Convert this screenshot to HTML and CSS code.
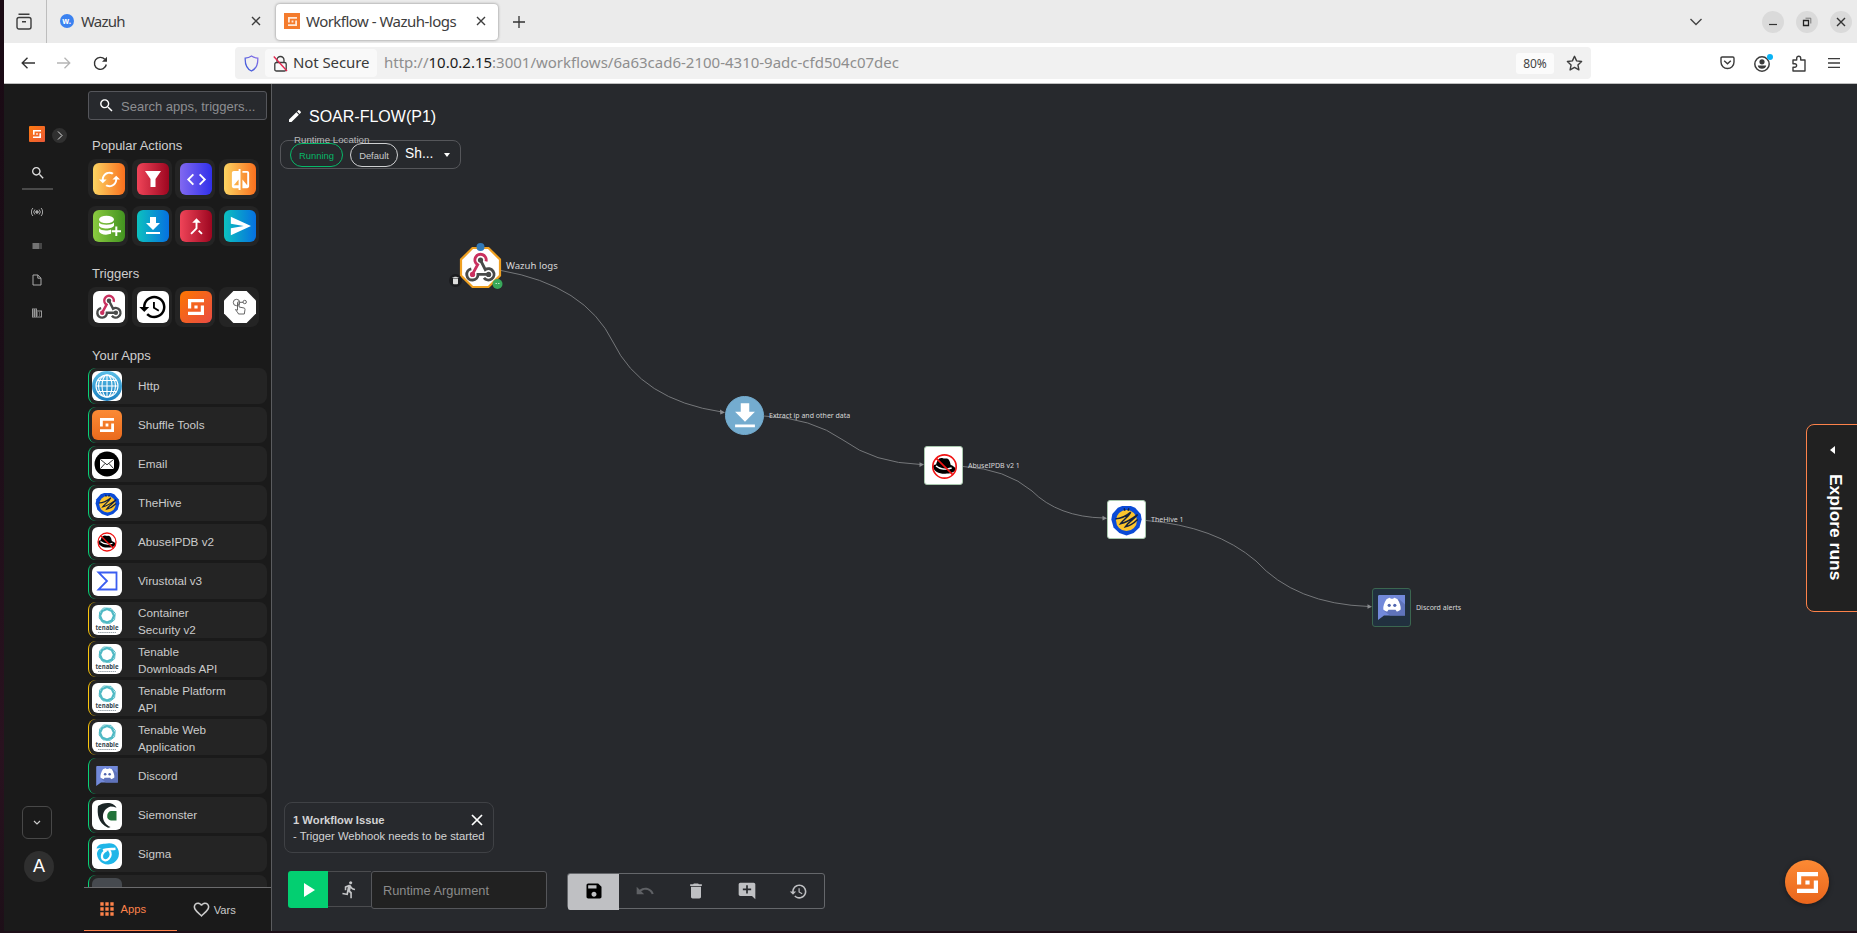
FILE: index.html
```html
<!DOCTYPE html>
<html lang="en">
<head>
<meta charset="utf-8">
<title>Workflow - Wazuh-logs</title>
<link rel="stylesheet" href="styles.css">
</head>
<body>
<svg class="defs" aria-hidden="true">
  <defs>
    <linearGradient id="g-sky" x1="0" y1="0" x2="0" y2="1"><stop offset="0" stop-color="#5cc0e8"/><stop offset="1" stop-color="#1a7fc0"/></linearGradient>
    <linearGradient id="g-shield" x1="0" y1="1" x2="1" y2="0"><stop offset="0" stop-color="#3559d8"/><stop offset="1" stop-color="#8a6fe8"/></linearGradient>
  </defs>
  <symbol id="close" viewBox="0 0 10 10"><path d="M1 1l8 8M9 1L1 9" fill="none" stroke="currentColor" stroke-width="1.4"/></symbol>
  <symbol id="shuffle" viewBox="0 0 20 20"><path d="M0 0h20v4H4v8H0zM20 20H0v-4h16V8h4zM8 8h4v4H8z" fill="currentColor"/></symbol>
  <symbol id="search" viewBox="0 0 24 24"><path fill="currentColor" d="M15.5 14h-.79l-.28-.27C15.41 12.59 16 11.11 16 9.5 16 5.91 13.09 3 9.5 3S3 5.91 3 9.5 5.91 16 9.5 16c1.61 0 3.09-.59 4.23-1.57l.27.28v.79l5 4.99L20.49 19l-4.99-5zm-6 0C7.01 14 5 11.99 5 9.5S7.01 5 9.5 5 14 7.01 14 9.5 11.99 14 9.5 14z"/></symbol>
  <symbol id="download" viewBox="0 0 24 24"><path fill="currentColor" d="M19 9h-4V3H9v6H5l7 7 7-7zM5 18v2h14v-2H5z"/></symbol>
  <symbol id="trash" viewBox="0 0 24 24"><path fill="currentColor" d="M6 19c0 1.1.9 2 2 2h8c1.1 0 2-.9 2-2V7H6v12zM19 4h-3.5l-1-1h-5l-1 1H5v2h14V4z"/></symbol>
  <symbol id="history" viewBox="0 0 24 24"><path fill="currentColor" d="M13 3c-4.97 0-9 4.03-9 9H1l3.89 3.89.07.14L9 12H6c0-3.87 3.13-7 7-7s7 3.13 7 7-3.13 7-7 7c-1.93 0-3.68-.79-4.94-2.06l-1.42 1.42C8.27 19.99 10.51 21 13 21c4.97 0 9-4.03 9-9s-4.03-9-9-9zm-1 5v5l4.28 2.54.72-1.21-3.5-2.08V8H12z"/></symbol>
  <symbol id="webhook" viewBox="0 0 24 24">
    <g fill="none" stroke-width="2.1">
      <path d="M16 7.6A4.1 4.1 0 1 0 9.9 10L6.3 16.6" stroke="#c9305f"/>
      <path d="M12 6.6l3.5 6.9a4.1 4.1 0 1 1-1 6" stroke="#484a49"/>
      <path d="M17.8 17h-7.6a4.1 4.1 0 1 1-4.9-4" stroke="#484a49"/>
    </g>
    <circle cx="12" cy="6.6" r="1.9" fill="#484a49"/><circle cx="6.2" cy="17" r="1.9" fill="#c9305f"/><circle cx="17.9" cy="17" r="1.9" fill="#484a49"/>
  </symbol>
  <symbol id="thehive" viewBox="0 0 30 30">
    <path d="M8 5.5l3.5-1.400h7L22 5.500l4.500 5 .8 4.500-1.800 6.500-4.700 4.400-5.800 2.100-5.800-2.100L4.500 21.500 2.700 15l.8-4.500z" fill="#0b4bd6"/>
    <circle cx="15" cy="15.800" r="8.500" fill="#fcc52d"/>
    <path d="M13 6l.8 1.800M17 6l-.8 1.800M6 14.500c5-.3 9-2.500 12.500-5.500M18.500 9c-2 4-6 6-8.500 9.500 5-1 10-4.500 14-7.500M24 11c-3 4-7.500 6-10 10 4-1 7.500-3.500 10-6" fill="none" stroke="#14223c" stroke-width="1.200"/>
  </symbol>
  <symbol id="abuse" viewBox="0 0 30 30">
    <path d="M6.200 15.500c-.3-1.600 1.300-2.200 2.300-2 .8-2.600 1.700-5 4-5 1.300 0 1.600.5 2.700.4 2.700-.4 3.800.8 4.600 5 2 .6 4.200 2.400 3.800 3.500-1 2.400-4.700 3.300-8.600 3.200-4.500 0-8.200-2.300-8.800-5.100z" fill="#000"/>
    <path d="M8.500 14.500c3 2.600 8 3 12 1.700" fill="none" stroke="#fff" stroke-width="1.200"/>
    <circle cx="15" cy="15" r="9" fill="none" stroke="#f01414" stroke-width="1.300"/><path d="M8.700 8.700l12.600 12.600" stroke="#f01414" stroke-width="1.300"/>
  </symbol>
  <symbol id="discord" viewBox="0 0 27 25">
    <path d="M0 1.500C0 .5.500 0 1.500 0H27v20.500H6L0 25z" fill="#7289da"/>
    <path d="M21 4l6 5.500v11H12l-6-4.500z" fill="#5f73bb"/>
    <path d="M8.500 4.200C10.500 3 12 2.800 12 2.800l.8.900h2.400l.8-.9s1.500.2 3.500 1.400c2.200 3.500 3.500 7 3.200 10.300-1.700 1.700-4 2-4 2l-1.200-1.700h-7l-1.200 1.700s-2.300-.3-4-2c-.3-3.300 1-6.800 3.200-10.300z" fill="#fff"/>
    <circle cx="11.200" cy="10.300" r="1.600" fill="#5166b0"/><circle cx="16.800" cy="10.300" r="1.600" fill="#5166b0"/>
  </symbol>
</svg>

<div class="desktop">
  <div class="window">
    <header class="tabs">
      <div class="tabs-view"><svg width="16" height="17" viewBox="0 0 16 17" fill="none" stroke="#3c3c3c" stroke-width="1.400"><rect x="1" y="4.500" width="14" height="11.500" rx="2"/><path d="M2.500 1.200h11M6 8.800h4"/></svg></div>
      <div class="tab">
        <svg class="tab-fav" width="14" height="14" viewBox="0 0 14 14"><circle cx="7" cy="7" r="7" fill="#3b82f0"/><text x="6.600" y="9.600" text-anchor="middle" class="fav-word">w.</text></svg>
        <span class="tab-title t1">Wazuh</span><svg class="x" width="10" height="10"><use href="#close"/></svg>
      </div>
      <div class="tab active">
        <span class="fav-shuffle"><svg width="9" height="9"><use href="#shuffle"/></svg></span>
        <span class="tab-title t2">Workflow - Wazuh-logs</span><svg class="x" width="10" height="10"><use href="#close"/></svg>
      </div>
      <svg class="plus" width="12" height="12" viewBox="0 0 12 12"><path d="M6 0v12M0 6h12" stroke="#333" stroke-width="1.300"/></svg>
      <div class="tabs-right">
        <svg class="more" width="14" height="8" viewBox="0 0 14 8"><path d="M1.500 1l5.500 5.500L12.500 1" fill="none" stroke="#444" stroke-width="1.400"/></svg>
        <span class="wbtn"><svg width="10" height="10" viewBox="0 0 10 10"><path d="M1 7.500h8" stroke="#333" stroke-width="1.200"/></svg></span>
        <span class="wbtn"><svg width="10" height="10" viewBox="0 0 10 10" fill="none"><path d="M1.500 3.500h5v5h-5z" stroke="#222" stroke-width="1.300"/><path d="M3.500 1.200h5.300v5.300" stroke="#777"/></svg></span>
        <span class="wbtn"><svg width="10" height="10"><use href="#close"/></svg></span>
      </div>
    </header>

    <nav class="toolbar">
      <svg class="back" width="14" height="12" viewBox="0 0 14 12"><path d="M14 6H1M6.500 .7L1.200 6l5.300 5.300" fill="none" stroke="#333" stroke-width="1.400"/></svg>
      <svg class="fwd" width="14" height="12" viewBox="0 0 14 12"><path d="M0 6h13M7.500 .7L12.800 6l-5.300 5.300" fill="none" stroke="#b5b5b5" stroke-width="1.300"/></svg>
      <svg class="reload" width="15" height="15" viewBox="0 0 15 15"><path d="M13.300 8.500A6 6 0 1 1 11.800 3.300" fill="none" stroke="#333" stroke-width="1.400"/><path d="M14 .8v5H9z" fill="#333"/></svg>
      <div class="url">
        <svg class="shield" width="15" height="17" viewBox="0 0 15 17"><path d="M7.500 1c2 1.400 4 2 6.300 2.200.2 5.600-1 10.300-6.300 12.800C2.200 13.500 1 8.800 1.200 3.200 3.500 3 5.500 2.400 7.500 1z" fill="none" stroke="url(#g-shield)" stroke-width="1.300"/></svg>
        <div class="secure">
          <svg width="15" height="17" viewBox="0 0 15 17" fill="none"><path d="M4 7.500V5a3.500 3.500 0 0 1 7 0v2.500M3.500 7.500h8c1 0 1.700.6 1.700 1.500v5.500c0 .9-.7 1.500-1.700 1.500h-8c-1 0-1.700-.6-1.700-1.500V9c0-.9.700-1.500 1.700-1.500z" stroke="#3c3c3c" stroke-width="1.300"/><path d="M.8 1.500L14 16" stroke="#e22850" stroke-width="1.400"/></svg>
          <span>Not Secure</span>
        </div>
        <span class="address">http://<b>10.0.2.15</b>:3001/workflows/6a63cad6-2100-4310-9adc-cfd504c07dec</span>
        <span class="zoom">80%</span>
        <svg width="17" height="17" viewBox="0 0 17 17"><path d="M8.500 1.300l2.100 4.600 5 .6-3.700 3.400 1 5-4.400-2.500-4.400 2.500 1-5L1.400 6.500l5-.6z" fill="none" stroke="#3c3c3c" stroke-width="1.400" stroke-linejoin="round"/></svg>
      </div>
      <div class="tools">
        <svg width="15" height="14" viewBox="0 0 15 14" fill="none" stroke="#3c3c3c" stroke-width="1.400"><path d="M2.200 1h10.600c.8 0 1.200.5 1.200 1.200V6c0 4-3 6.500-6.500 6.500S1 10 1 6V2.200C1 1.500 1.400 1 2.200 1z"/><path d="M4.200 4.700l3.300 3.100 3.300-3.100"/></svg>
        <svg width="19" height="18" viewBox="0 0 19 18"><circle cx="8" cy="10" r="7.200" fill="none" stroke="#3c3c3c" stroke-width="1.500"/><circle cx="8" cy="7.800" r="2.600" fill="#3c3c3c"/><path d="M3.800 11.500h8.400c0 2-2 3.300-4.200 3.300s-4.200-1.300-4.200-3.300z" fill="#3c3c3c"/><circle cx="16" cy="3" r="3" fill="#0ab3f5"/></svg>
        <svg width="14" height="17" viewBox="0 0 14 17"><path d="M1 5h3.700V3.200a2 2 0 0 1 4 0V5H13v11H1v-3.700h1.800a1.800 1.800 0 0 0 0-3.600H1z" fill="none" stroke="#3c3c3c" stroke-width="1.400" stroke-linejoin="round"/></svg>
        <svg class="menu" width="12" height="10" viewBox="0 0 12 10"><path d="M0 .7h12M0 5h12M0 9.300h12" stroke="#3c3c3c" stroke-width="1.300"/></svg>
      </div>
    </nav>

    <main class="app">
      <aside class="rail">
        <div class="rail-top"><span class="logo"><svg width="8" height="8"><use href="#shuffle"/></svg></span><span class="expand"><svg width="6" height="9" viewBox="0 0 6 9"><path d="M1 .5l4 4-4 4" fill="none" stroke="#ddd"/></svg></span></div>
        <div class="rail-item current"><svg width="16" height="16"><use href="#search"/></svg></div>
        <svg class="r2" width="12" height="10" viewBox="0 0 12 10" fill="none" stroke="#aaa"><circle cx="6" cy="5" r="1.300" fill="#aaa"/><path d="M3.900 2.500a3.500 3.500 0 0 0 0 5M8.100 2.500a3.500 3.500 0 0 1 0 5M1.900 1a6 6 0 0 0 0 8M10.100 1a6 6 0 0 1 0 8"/></svg>
        <svg class="r3" width="12" height="12" viewBox="0 0 24 24"><path fill="#ccc" d="M3 9h14V7H3v2zm0 4h14v-2H3v2zm0 4h14v-2H3v2zm16 0h2v-2h-2v2zm0-10v2h2V7h-2zm0 6h2v-2h-2v2z"/></svg>
        <svg class="r4" width="10" height="12" viewBox="0 0 10 12"><path d="M1 1h4.800L9 4.200V11H1zM5.800 1v3.200H9" fill="none" stroke="#aaa"/></svg>
        <svg class="r5" width="12" height="12" viewBox="0 0 24 24"><path fill="#999" d="M12 7V3H2v18h20V7H12zM6 19H4v-2h2v2zm0-4H4v-2h2v2zm0-4H4V9h2v2zm0-4H4V5h2v2zm4 12H8v-2h2v2zm0-4H8v-2h2v2zm0-4H8V9h2v2zm0-4H8V5h2v2zm10 12h-8v-2h2v-2h-2v-2h2v-2h-2V9h8v10zm-2-8h-2v2h2v-2zm0 4h-2v2h2v-2z"/></svg>
        <div class="rail-bottom">
          <span class="rail-more"><svg width="8" height="5" viewBox="0 0 8 5"><path d="M1 1l3 3 3-3" fill="none" stroke="#ccc" stroke-width="1.200"/></svg></span>
          <span class="avatar">A</span>
        </div>
      </aside>

      <section class="panel">
        <div class="panel-body">
          <div class="search"><svg width="17" height="17"><use href="#search"/></svg><span>Search apps, triggers...</span></div>
          <h2 class="h-popular">Popular Actions</h2>
          <div class="tiles">
            <div class="tile"><span class="yellow"><svg width="23" height="23" viewBox="0 0 24 24"><path fill="#fff" d="M19 8l-4 4h3c0 3.310-2.690 6-6 6-1.010 0-1.970-.25-2.800-.7l-1.460 1.460C8.970 19.540 10.430 20 12 20c4.420 0 8-3.580 8-8h3l-4-4zM6 12c0-3.310 2.690-6 6-6 1.010 0 1.970.25 2.800.7l1.460-1.460C15.030 4.460 13.570 4 12 4c-4.420 0-8 3.580-8 8H1l4 4 4-4H6z"/></svg></span></div>
            <div class="tile"><span class="red"><svg width="16" height="16" viewBox="0 0 16 16"><path fill="#fff" d="M0 0h16l-5.500 8v8h-5V8z"/></svg></span></div>
            <div class="tile"><span class="violet"><svg width="23" height="23" viewBox="0 0 24 24"><path fill="#fff" d="M9.400 16.600L4.800 12l4.600-4.600L8 6l-6 6 6 6 1.400-1.400zm5.200 0l4.600-4.600-4.600-4.600L16 6l6 6-6 6-1.400-1.400z"/></svg></span></div>
            <div class="tile"><span class="yellow"><svg width="23" height="23" viewBox="0 0 24 24"><path fill="#fff" d="M10 3H5c-1.100 0-2 .9-2 2v14c0 1.100.9 2 2 2h5v2h2V1h-2v2zm0 15H5l5-6v6zm9-15h-5v2h5v13l-5-6v9h5c1.100 0 2-.9 2-2V5c0-1.100-.9-2-2-2z"/></svg></span></div>
            <div class="tile"><span class="green"><svg width="24" height="22" viewBox="0 0 24 22"><g fill="#fff"><ellipse cx="9.500" cy="4.500" rx="7.500" ry="3.800"/><path d="M2 7.500c2 3 13 3 15 0v3c-1 4-14 4-15 0zM2 13c2 3 9 3 12 1.500v4.300C9 20.500 3 19.500 2 16.500z"/><path d="M18.300 11.500h2v3.700H24v2h-3.700V21h-2v-3.800h-3.600v-2h3.600z"/></g></svg></span></div>
            <div class="tile"><span class="cyan"><svg class="white" width="24" height="24"><use href="#download"/></svg></span></div>
            <div class="tile"><span class="red"><svg width="23" height="23" viewBox="0 0 24 24"><path fill="#fff" d="M17 20.410L18.410 19 15 15.590 13.590 17 17 20.410zM7.500 8H11v5.590L5.590 19 7 20.410l6-6V8h3.500L12 3.500 7.500 8z"/></svg></span></div>
            <div class="tile"><span class="cyan"><svg width="22" height="22" viewBox="0 0 24 24"><path fill="#fff" d="M2 22L24 12 2 2v7.500L16 12 2 14.500z"/></svg></span></div>
          </div>
          <h2 class="h-triggers">Triggers</h2>
          <div class="tiles">
            <div class="tile"><span class="paper"><svg width="28" height="28"><use href="#webhook"/></svg></span></div>
            <div class="tile"><span class="paper black"><svg width="30" height="30"><use href="#history"/></svg></span></div>
            <div class="tile"><span class="orange"><svg class="white" width="16" height="16"><use href="#shuffle"/></svg></span></div>
            <div class="tile"><svg width="32" height="32" viewBox="0 0 32 32"><path d="M9.400 0h13.200L32 9.400v13.200L22.600 32H9.400L0 22.600V9.400z" fill="#fff"/><g fill="none" stroke="#555" stroke-width=".9"><circle cx="12.500" cy="11.500" r="3.200"/><circle cx="20.700" cy="11" r="1.700"/><path d="M15.700 11.300h3.300M13.500 19v-7.500c0-1 1.600-1 1.600 0v4.500l5 1c.8.300 1 .8.900 1.500l-.7 4.500h-5.800c-.5-1.500-2-2.500-3-4.500l2 .8"/></g></svg></div>
          </div>
          <h2 class="h-apps">Your Apps</h2>
          <ul class="apps">
            <li><span class="ic"><svg width="30" height="30" viewBox="0 0 30 30"><circle cx="15" cy="15" r="15" fill="url(#g-sky)"/><g fill="none" stroke="#fff" stroke-width="1.100"><circle cx="15" cy="15" r="11"/><ellipse cx="15" cy="15" rx="5" ry="11"/><ellipse cx="15" cy="15" rx="8.500" ry="11"/><path d="M15 4v22M4 15h22M6 9.500h18M6 20.500h18"/></g></svg></span><span class="name">Http</span></li>
            <li><span class="ic orange2"><svg class="white" width="14" height="14"><use href="#shuffle"/></svg></span><span class="name">Shuffle Tools</span></li>
            <li><span class="ic"><svg width="30" height="30" viewBox="0 0 30 30"><circle cx="15" cy="15" r="12.500" fill="#000"/><rect x="8" y="10" width="14" height="10" rx="1" fill="#fff"/><path d="M8.500 10.500l6.500 5.300 6.500-5.300M8.500 19.500l4.500-5M21.500 19.500l-4.500-5" fill="none" stroke="#000" stroke-width=".8"/></svg></span><span class="name">Email</span></li>
            <li><span class="ic"><svg width="29" height="29"><use href="#thehive"/></svg></span><span class="name">TheHive</span></li>
            <li><span class="ic"><svg width="30" height="30"><use href="#abuse"/></svg></span><span class="name">AbuseIPDB v2</span></li>
            <li><span class="ic"><svg width="30" height="30" viewBox="0 0 30 30"><path d="M6.500 6.500h18v17h-18l8.500-8.500z" fill="none" stroke="#3a5df0" stroke-width="1.800"/></svg></span><span class="name">Virustotal v3</span></li>
            <li class="warn"><span class="ic"><svg width="30" height="30" viewBox="0 0 30 30"><g id="tenable"><g fill="none" stroke="#4fb9c4"><path d="M15 4l4.800 2 2.200 4.800-2.200 4.800-4.800 2-4.800-2L8 10.800 10.200 6z" stroke-width="2.200"/><path d="M11.500 3l7.500.4 4.200 4.900-.6 6.500-4.600 3.500-7-.5-3.800-4.700.4-6z" stroke-width="1"/></g><text x="15" y="25.300" text-anchor="middle" textLength="23" lengthAdjust="spacingAndGlyphs" class="tenable-word">tenable</text><path d="M6 27.500h18" stroke="#9aa4ab" stroke-width="1" stroke-dasharray="1.500 .6"/></g></svg></span><span class="name">Container Security v2</span></li>
            <li class="warn"><span class="ic"><svg width="30" height="30" viewBox="0 0 30 30"><use href="#tenable"/></svg></span><span class="name">Tenable Downloads API</span></li>
            <li class="warn"><span class="ic"><svg width="30" height="30" viewBox="0 0 30 30"><use href="#tenable"/></svg></span><span class="name">Tenable Platform API</span></li>
            <li class="warn"><span class="ic"><svg width="30" height="30" viewBox="0 0 30 30"><use href="#tenable"/></svg></span><span class="name">Tenable Web Application</span></li>
            <li><span class="ic clear"><svg width="22" height="20"><use href="#discord"/></svg></span><span class="name">Discord</span></li>
            <li><span class="ic"><svg width="30" height="30" viewBox="0 0 30 30"><path d="M18.500 3.300C13 2.500 9.500 4 6 6c-1 8 0 17 9.500 21.500 1 .3 2 .1 3-.5-9.500-4-10.500-17 0-20.500 2 0 4 .5 6 1.300-.5-1.500-3-3.800-6-4.500z" fill="#1b2526"/><path d="M24.500 11v9.500h-5.500a4 4 0 0 1-3.800-4.500c0-3 1.800-5 4.300-5z" fill="#22733a"/></svg></span><span class="name">Siemonster</span></li>
            <li><span class="ic"><svg width="30" height="30" viewBox="0 0 30 30"><path d="M4.500 9.500C6 5.500 9 4.800 13 4.800c3-.6 6-.8 9 .5a11 11 0 1 1-17 10C5 12 7 9.500 10 9z" fill="#1fb6e8"/><path d="M11 11.200c4-1.500 8-1 12.500-1.500" fill="none" stroke="#fff" stroke-width="2.400"/><path d="M14.500 11.500c-3.500 1.500-5 4-4.500 7s4 3.800 6.500 1.500 3-6 .5-9" fill="none" stroke="#fff" stroke-width="2.300"/></svg></span><span class="name">Sigma</span></li>
            <li><span class="ic gray"></span><span class="name"></span></li>
          </ul>
        </div>
        <div class="panel-tabs">
          <div class="ptab on"><svg width="20" height="20" viewBox="0 0 24 24"><path fill="currentColor" d="M4 8h4V4H4v4zm6 12h4v-4h-4v4zm-6 0h4v-4H4v4zm0-6h4v-4H4v4zm6 0h4v-4h-4v4zm6-10v4h4V4h-4zm-6 4h4V4h-4v4zm6 6h4v-4h-4v4zm0 6h4v-4h-4v4z"/></svg><span>Apps</span></div>
          <div class="ptab"><svg width="19" height="19" viewBox="0 0 24 24"><path fill="currentColor" d="M16.500 3c-1.740 0-3.410.81-4.500 2.090C10.910 3.810 9.240 3 7.500 3 4.420 3 2 5.420 2 8.500c0 3.780 3.400 6.860 8.550 11.540L12 21.350l1.450-1.320C18.600 15.360 22 12.280 22 8.500 22 5.420 19.580 3 16.500 3zm-4.400 15.550l-.1.1-.1-.1C7.140 14.240 4 11.390 4 8.500 4 6.500 5.500 5 7.500 5c1.540 0 3.040.99 3.570 2.360h1.870C13.460 5.990 14.960 5 16.500 5c2 0 3.500 1.500 3.500 3.500 0 2.890-3.140 5.740-7.900 10.050z"/></svg><span>Vars</span></div>
        </div>
      </section>

      <section class="canvas">
        <svg class="edges" viewBox="272 84 1585 847" width="1585" height="847">
          <g fill="none" stroke="#75777a" stroke-width="1">
            <path d="M501 270.500Q585 285 613 342Q641 400 722 412"/>
            <path d="M764 416Q812 418 843 440Q874 463 921 464.500"/>
            <path d="M963 466.500Q1006 469 1032 491Q1058 517 1104 518"/>
            <path d="M1146 520.500Q1215 526 1256 561Q1295 604 1369 606.500"/>
          </g>
          <g fill="#8a8c8f"><path d="M725 412.600l-5-3 .3 4.800z"/><path d="M924 464.600l-4.500-2.300v4.600z"/><path d="M1107 518.200l-4.500-2.400v4.600z"/><path d="M1372 606.700l-4.500-2.500v4.600z"/></g>
        </svg>
        <div class="node n-hook"><svg width="54" height="46" viewBox="449 243 54 46"><path d="M472.500 248h16l11.500 11.500v16L488.500 287h-16L461 275.500v-16z" fill="#fff" stroke="#f0a020" stroke-width="2.200"/><use href="#webhook" x="464" y="251" width="33" height="33"/><circle cx="480.500" cy="247" r="4" fill="#3179b8"/><circle cx="497.500" cy="284" r="5" fill="#38a85a"/><path d="M495.500 283.500h1.500m1 0h1.500" stroke="#b9e6c5"/><circle cx="455.500" cy="280.500" r="6.500" fill="#1b1c1f"/><use href="#trash" x="450.500" y="275.500" width="10" height="10" color="#ddd"/></svg><span>Wazuh logs</span></div>
        <div class="node n-extract"><i><svg width="34" height="34"><use href="#download"/></svg></i><span>Extract ip and other data</span></div>
        <div class="node n-abuse"><i><svg width="39" height="39"><use href="#abuse"/></svg></i><span>AbuseIPDB v2 1</span></div>
        <div class="node n-hive"><i><svg width="37" height="37"><use href="#thehive"/></svg></i><span>TheHive 1</span></div>
        <div class="node n-discord"><i><svg width="27" height="25"><use href="#discord"/></svg></i><span>Discord alerts</span></div>

        <div class="title"><svg width="16" height="16" viewBox="0 0 24 24"><path fill="#fff" d="M3 17.250V21h3.750L17.810 9.940l-3.750-3.750L3 17.250zM20.710 7.040c.39-.39.39-1.020 0-1.410l-2.340-2.340c-.39-.39-1.020-.39-1.410 0l-1.830 1.830 3.750 3.750 1.830-1.830z"/></svg><span>SOAR-FLOW(P1)</span></div>
        <div class="location"><span class="legend">Runtime Location</span><span class="chip run">Running</span><span class="chip">Default</span><span class="loc">Sh...</span><i class="caret"></i></div>

        <div class="issue"><div class="issue-text"><b>1 Workflow Issue</b><span>- Trigger Webhook needs to be started</span></div><svg width="12" height="12" viewBox="0 0 12 12"><path d="M1 1l10 10M11 1L1 11" stroke="#fff" stroke-width="1.700"/></svg></div>

        <div class="runbar">
          <div class="play"><svg width="11" height="14" viewBox="0 0 11 14"><path d="M0 0l11 7-11 7z" fill="#fff"/></svg></div>
          <div class="walk"><svg width="19" height="19" viewBox="0 0 24 24"><path fill="#c5c6c8" d="M13.490 5.480c1.100 0 2-.9 2-2s-.9-2-2-2-2 .9-2 2 .9 2 2 2zm-3.600 13.900l1-4.400 2.100 2v6h2v-7.500l-2.100-2 .6-3c1.300 1.500 3.300 2.500 5.500 2.500v-2c-1.900 0-3.500-1-4.300-2.400l-1-1.600c-.4-.6-1-1-1.700-1-.3 0-.5.1-.8.1l-5.200 2.200v4.700h2v-3.400l1.800-.7-1.600 8.100-4.900-1-.4 2 7 1.400z"/></svg></div>
          <div class="arg">Runtime Argument</div>
        </div>
        <div class="actions">
          <div class="save"><svg width="20" height="20" viewBox="0 0 24 24"><path d="M17 3H5c-1.110 0-2 .9-2 2v14c0 1.100.89 2 2 2h14c1.100 0 2-.9 2-2V7l-4-4zm-5 16c-1.660 0-3-1.340-3-3s1.340-3 3-3 3 1.340 3 3-1.340 3-3 3zm3-10H5V5h10v4z"/></svg></div>
          <div class="dim"><svg width="20" height="20" viewBox="0 0 24 24"><path fill="currentColor" d="M12.500 8c-2.650 0-5.050.99-6.900 2.600L2 7v9h9l-3.620-3.620c1.390-1.160 3.160-1.880 5.120-1.880 3.540 0 6.550 2.310 7.600 5.500l2.370-.78C21.080 11.030 17.150 8 12.500 8z"/></svg></div>
          <div><svg width="20" height="20"><use href="#trash"/></svg></div>
          <div><svg width="20" height="20" viewBox="0 0 24 24"><path fill="currentColor" d="M21.990 4c0-1.100-.89-2-1.990-2H4c-1.100 0-2 .9-2 2v12c0 1.100.9 2 2 2h14l4 4-.01-18zM17 11h-4v4h-2v-4H7V9h4V5h2v4h4v2z"/></svg></div>
          <div><svg width="19" height="19"><use href="#history"/></svg></div>
        </div>
        <div class="explore"><i></i><span>Explore runs</span></div>
        <div class="fab"><svg width="21" height="21"><use href="#shuffle"/></svg></div>
      </section>
    </main>
  </div>
</div>
</body>
</html>
```
FILE: styles.css
```css
* { box-sizing: border-box; }
body { margin: 0; width: 1857px; height: 933px; overflow: hidden; background: #17181a; font-family: "Liberation Sans", Arial, sans-serif; color: #cfcfcf; }
svg { display: block; flex: none; }
.defs { position: absolute; width: 0; height: 0; }
.desktop { height: 933px; padding: 0 0 2px 4px; background: linear-gradient(#1a0a14, #1b0d17 40%, #29121f 80%, #1d0f18); }
.window { height: 931px; display: flex; flex-direction: column; background: #fff; }

/* Browser tabs */
.tabs { height: 43px; background: #ebebeb; display: flex; align-items: center; color: #3d3d3d; font: 15px "Noto Sans", sans-serif; }
.tabs-view { width: 43px; height: 43px; border-right: 1px solid #bdbdbd; padding: 13px 0 0 12px; }
.tab { width: 222px; height: 36px; margin-right: 4px; padding: 0 8px 1px 13px; display: flex; align-items: center; }
.tab.active { background: #fff; border-radius: 4px; box-shadow: 0 0 3px rgba(0,0,0,.45); padding-left: 8px; padding-right: 12px; margin: 0 15px 0 3px; }
.tab-title { flex: 1; margin-left: 7px; white-space: nowrap; }
.t1 { letter-spacing: -.8px; }
.t2 { margin-left: 6px; letter-spacing: -.52px; }
.fav-word { font: bold 8px "Noto Sans", sans-serif; fill: #fff; }
.fav-shuffle { width: 16px; height: 16px; background: #f47b2c; color: #ffe8d6; display: grid; place-items: center; }
.tabs-right { margin-left: auto; display: flex; align-items: center; gap: 12px; padding-right: 5px; }
.more { margin-right: 47px; }
.wbtn { width: 22px; height: 22px; border-radius: 50%; background: #dadada; display: grid; place-items: center; color: #333; }

/* Browser toolbar */
.toolbar { height: 41px; background: #fff; border-bottom: 1px solid #bfbfbf; display: flex; align-items: center; padding-left: 17px; }
.back { margin-right: 22px; }
.fwd { margin-right: 22px; }
.url { margin-left: 127px; width: 1356px; height: 32px; border-radius: 4px; background: #f1f1f1; display: flex; align-items: center; padding: 0 8px 0 9px; font: 15px "Noto Sans", sans-serif; color: #8e8e8e; }
.secure { width: 112px; height: 28px; margin-left: 6px; border-radius: 4px; background: #f9f9f9; display: flex; align-items: center; gap: 5px; padding-left: 8px; color: #3b3b3b; white-space: nowrap; }
.secure span { margin-top: -2px; letter-spacing: -.1px; }
.address { margin: -2px 0 0 7px; flex: 1; white-space: nowrap; }
.address b { font-weight: normal; color: #1c1c1c; }
.zoom { width: 38px; height: 21px; line-height: 21px; border-radius: 3px; background: #fbfbfb; font-size: 12px; text-align: center; color: #444; margin-right: 12px; }
.tools { margin-left: auto; display: flex; align-items: center; gap: 19px; padding-right: 17px; }
.menu { margin-left: 3px; }

/* Application shell */
.app { flex: 1; min-height: 0; display: flex; background: #1a1a1a; }
.rail { width: 80px; display: flex; flex-direction: column; align-items: flex-start; padding-bottom: 49px; }
.rail-top { display: flex; align-items: center; margin: 41px 0 0 25px; gap: 7px; }
.logo { width: 16px; height: 16px; border-radius: 1px; background: linear-gradient(135deg, #fd7a10, #ea5838); color: #fff; display: grid; place-items: center; }
.expand { width: 15px; height: 15px; border-radius: 50%; background: #303030; display: grid; place-items: center; margin-top: 3px; }
.rail-item { margin: 22px 0 0 18px; width: 31px; height: 25px; border-bottom: 2px solid #4a4a4a; display: flex; justify-content: center; color: #ddd; }
.rail > svg { margin-left: 27px; }
.rail > .r2 { margin-top: 17px; }
.rail > .r3 { margin-top: 23px; }
.rail > .r4 { margin: 22px 0 0 28px; }
.rail > .r5 { margin-top: 21px; }
.rail-bottom { margin: auto 0 0 18px; display: flex; flex-direction: column; gap: 12px; }
.rail-more { width: 30px; height: 33px; border: 1px solid #484848; border-radius: 6px; display: grid; place-items: center; }
.avatar { margin-left: 2px; width: 30px; height: 31px; border-radius: 50%; background: #2f2f2f; color: #fff; display: grid; place-items: center; font-size: 18px; }

.panel { width: 188px; border-right: 1px solid #5b5c5f; display: flex; flex-direction: column; }
.panel-body { flex: 1; min-height: 0; overflow: hidden; padding: 7px 4px 0; }
.search { height: 29px; border: 1px solid #55565b; border-radius: 3px; background: #27292d; display: flex; align-items: center; padding-left: 9px; gap: 6px; font-size: 13px; color: #8d8e91; }
.search svg { color: #fff; }
.search span { margin-top: 1px; }
h2 { margin: 0 0 0 4px; font-size: 13px; font-weight: normal; line-height: 16px; color: #cfcfcf; }
.h-popular { margin-top: 18px; margin-bottom: 5px; }
.h-triggers { margin-top: 20px; margin-bottom: 5px; }
.h-apps { margin-top: 21px; margin-bottom: 4px; }
.tiles { display: grid; grid-template-columns: repeat(4, 40px); column-gap: 3.700px; row-gap: 7px; }
.tile { height: 40px; padding-left: 2px; border-radius: 8px; background: #242424; display: grid; place-items: center; }
.tile > span { width: 32px; height: 32px; border-radius: 6px; display: grid; place-items: center; }
.yellow { background: linear-gradient(90deg, #fcd462, #f9701e); }
.red { background: linear-gradient(90deg, #ef4458, #9d0620); }
.violet { background: linear-gradient(90deg, #8168f0, #3030ea); }
.green { background: linear-gradient(90deg, #8bcb40, #429320); }
.cyan { background: linear-gradient(90deg, #0cc1bf, #0670e0); }
.orange { background: linear-gradient(135deg, #fd7600, #e94b44); }
.paper { background: #fff; }
.black { color: #000; }
.white { color: #fff; }
.apps { list-style: none; margin: 0; padding: 0; display: flex; flex-direction: column; gap: 3px; }
.apps li { height: 36px; flex: none; border-left: 1px solid #07d277; border-radius: 8px; background: #242424; display: flex; align-items: center; padding-left: 3px; gap: 16px; font-size: 11.700px; line-height: 17px; color: #cbcbcb; }
.apps li.warn { border-left-color: #fbc60c; }
.name { width: 92px; padding-bottom: 2px; }
.warn .name { padding: 1px 0 0; }
.ic { width: 30px; height: 30px; border-radius: 6px; background: #fff; overflow: hidden; display: grid; place-items: center; }
.ic.clear { background: none; }
.ic.gray { background: #464a4f; }
.ic.orange2 { background: linear-gradient(#fb8a35, #ea6a1d); }
.tenable-word { font: bold 7px "Open Sans", sans-serif; fill: #33454f; }
.panel-tabs { height: 44px; border-top: 1px solid #6b6b6d; display: flex; font-size: 11.200px; color: #cbcbcb; }
.ptab { width: 94px; padding-right: 21px; display: flex; align-items: center; justify-content: center; gap: 3px; }
.ptab.on { padding-right: 18px; color: #fd824a; border-bottom: 1px solid #fd824a; }

/* Workflow canvas */
.canvas { position: relative; flex: 1; background: #27292d; overflow: hidden; }
.node { position: absolute; display: flex; align-items: center; font: 7px "Noto Sans", sans-serif; color: #d8d8d8; white-space: nowrap; gap: 5px; }
.node span { margin-top: -1px; }
.node i { width: 39px; height: 39px; border-radius: 3px; background: #fff; border: 1px solid #a9c8ae; display: grid; place-items: center; overflow: hidden; }
.n-hook { left: 177px; top: 159px; font-size: 9.600px; gap: 3px; }
.n-extract { left: 453px; top: 312px; }
.n-extract i { border-radius: 50%; background: #74accf; border-color: #74accf; color: #fff; }
.n-abuse { left: 652px; top: 362px; }
.n-hive { left: 835px; top: 416px; }
.n-discord { left: 1100px; top: 504px; }
.n-discord i { background: #21303f; border-color: #3b6650; }
.edges { position: absolute; left: 0; top: 0; }
.title { position: absolute; left: 15px; top: 24px; display: flex; align-items: center; gap: 6px; font-size: 16px; color: #fff; }
.title svg { margin-top: -2px; }
.location { position: absolute; left: 8px; top: 56px; width: 181px; height: 29px; border: 1px solid #55565a; border-radius: 8px; display: flex; padding: 2px 0 0 9px; }
.legend { position: absolute; left: 13px; top: -7px; font-size: 9.700px; line-height: 12px; color: #b7b8ba; white-space: nowrap; }
.chip { width: 48px; height: 24px; border: 1px solid #cfd0d2; border-radius: 12px; font-size: 9.400px; line-height: 23px; text-align: center; color: #c8c9cb; }
.chip.run { width: 53px; border-color: #06b868; color: #06b868; margin-right: 7px; }
.loc { margin: 2px 0 0 7px; font-size: 13.800px; line-height: 17px; color: #fff; width: 39px; }
.caret { margin-top: 10px; height: 0; border: 3.500px solid transparent; border-top: 4px solid #fff; border-bottom: 0; }
.issue { position: absolute; left: 12px; top: 718px; width: 210px; height: 51px; border: 1px solid #3f4145; border-radius: 8px; display: flex; padding: 9px 10px 0 8px; font-size: 11.240px; line-height: 16px; color: #d3d3d4; }
.issue-text { display: flex; flex-direction: column; width: 178px; white-space: nowrap; }
.issue svg { margin-top: 2px; }
.runbar { position: absolute; left: 16px; top: 787px; display: flex; }
.play { width: 40px; height: 37px; background: #03cf71; border-radius: 3px 0 0 3px; display: grid; place-items: center; padding-left: 2px; }
.walk { width: 43px; height: 36px; border: solid #4b4c4f; border-width: 1px 0; display: grid; place-items: center; }
.arg { width: 176px; height: 38px; border: 1px solid #55565a; border-radius: 3px; background: #212121; font-size: 12.800px; line-height: 37px; padding-left: 11px; color: #8b8b8b; }
.actions { position: absolute; left: 295px; top: 789px; width: 258px; height: 36px; border: 1px solid #65676b; border-radius: 3px; display: flex; color: #bfc0c3; }
.actions > div { width: 51.400px; height: 34px; display: grid; place-items: center; }
.actions .save { height: 36px; background: #bfc0c3; color: #000; border-radius: 2px 0 0 2px; padding-bottom: 2px; }
.actions .dim { color: #5f6165; }
.explore { position: absolute; left: 1534px; top: 340px; width: 60px; height: 188px; border: 1px solid #fd824a; border-radius: 8px; background: #212121; color: #fff; padding: 21px 0 0 19px; }
.explore i { display: block; width: 0; margin-left: 4px; border: 4px solid transparent; border-right: 5px solid #fff; border-left: 0; }
.explore span { display: block; margin-top: 20px; writing-mode: vertical-rl; font-weight: bold; font-size: 17.400px; line-height: 20px; }
.fab { position: absolute; left: 1513px; top: 776px; width: 44px; height: 44px; border-radius: 50%; background: linear-gradient(#fc8a34, #e9651c); color: #fff; display: grid; place-items: center; box-shadow: 0 1px 5px rgba(0,0,0,.4); }
```
